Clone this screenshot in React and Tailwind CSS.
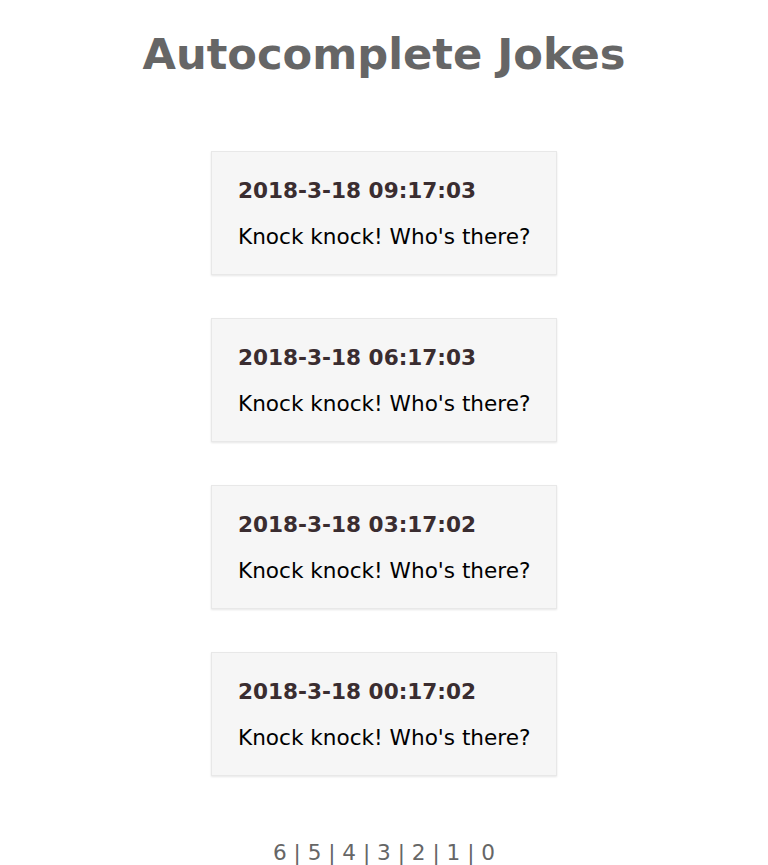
import React from "react";

const jokes = [
  "2018-3-18 09:17:03",
  "2018-3-18 06:17:03",
  "2018-3-18 03:17:02",
  "2018-3-18 00:17:02",
];

export default function App() {
  return (
    <div className="bg-white min-h-[865px] flex flex-col items-center" style={{ fontFamily: '"DejaVu Sans", sans-serif' }}>
      <h1 className="text-[43.2px] font-bold text-[#666666] mt-[26px] leading-[56px]">Autocomplete Jokes</h1>
      <div className="flex flex-col items-center gap-[43px] mt-[69px]">
        {jokes.map((d) => (
          <div key={d} className="w-[346px] h-[124px] bg-[#f6f6f6] border border-[#e8e8e8] shadow-[0_1px_2px_rgba(0,0,0,0.1)] pl-[26px] pr-[16px] pt-[24px] whitespace-nowrap">
            <div className="text-[21.6px] font-bold text-[#3a2d30] leading-[30px]">{d}</div>
            <div className="text-[21.6px] text-black leading-[30px] mt-[16px]">Knock knock! Who's there?</div>
          </div>
        ))}
      </div>
      <div className="mt-[62px] text-[21.6px] text-[#666666] leading-[30px]">6 | 5 | 4 | 3 | 2 | 1 | 0</div>
    </div>
  );
}
